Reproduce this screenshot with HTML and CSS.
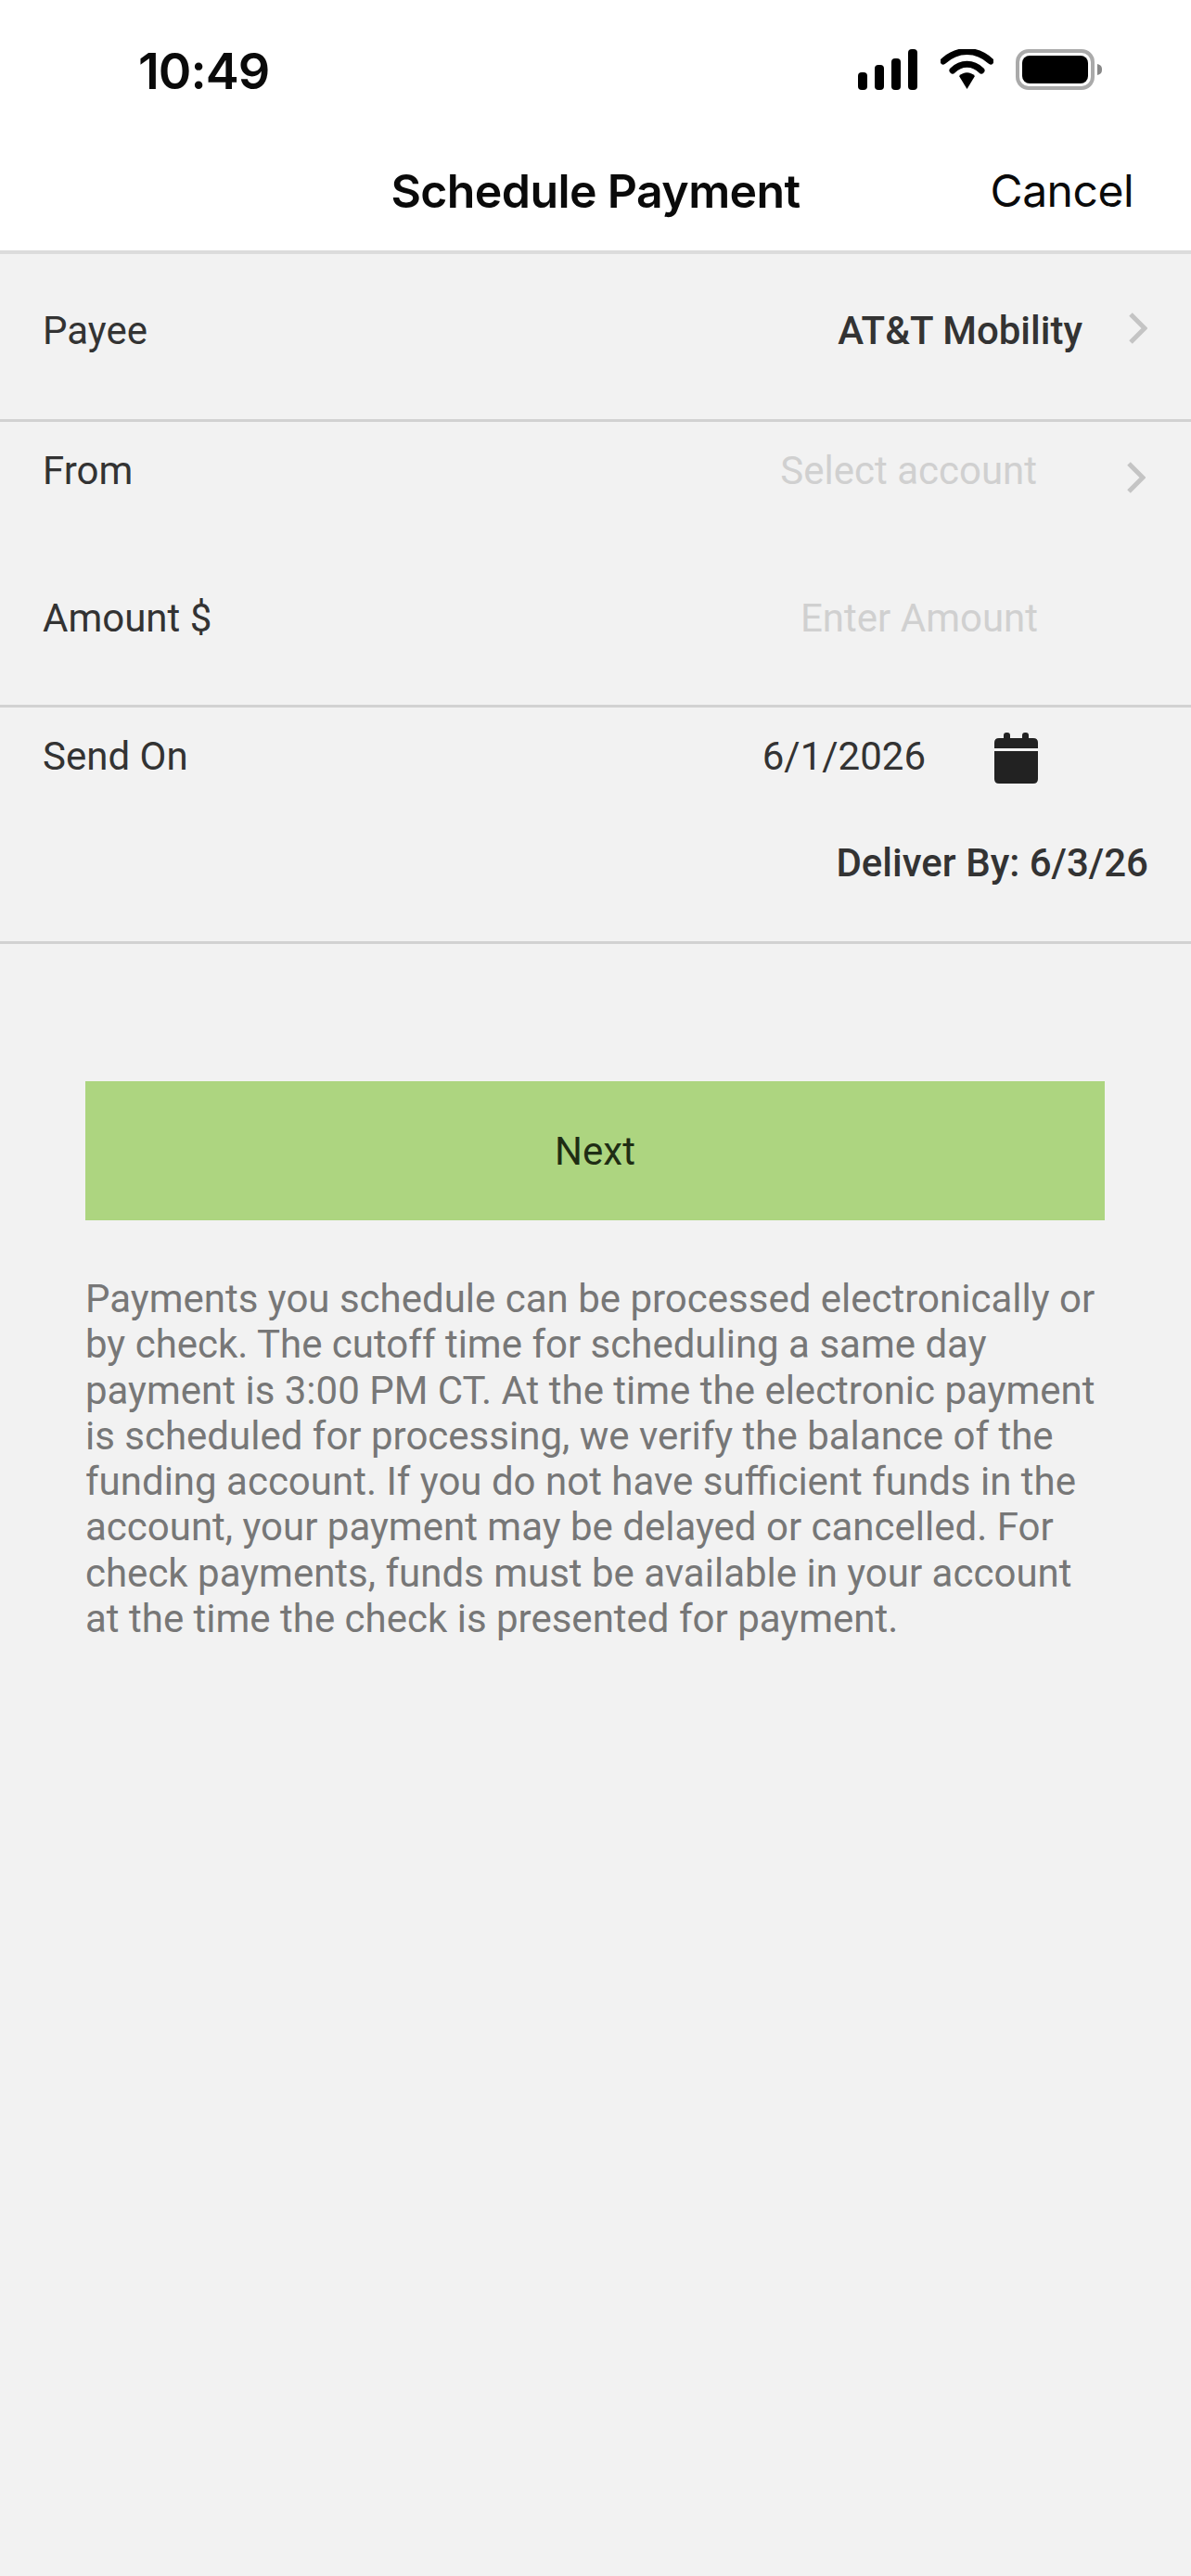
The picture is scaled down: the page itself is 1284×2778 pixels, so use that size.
FILE: index.html
```html
<!DOCTYPE html>
<html>
  <head>
    <meta charset="UTF-8">
    <title>Schedule Payment</title>
    <link rel="stylesheet" href="styles.css">
  </head>
  <body>
    <header class="top">
      <div class="status">
        <span class="time">10:49</span>
        <div class="status-icons">
          <svg class="signal" width="65" height="44" viewBox="0 0 65 44">
            <rect x="0" y="25" width="10" height="19" rx="4"/>
            <rect x="18" y="17" width="10" height="27" rx="4"/>
            <rect x="36" y="10" width="10" height="34" rx="4"/>
            <rect x="54" y="0" width="10" height="44" rx="4"/>
          </svg>
          <svg class="wifi" width="57" height="44" viewBox="0 0 57 44">
            <path d="M3 13 C18 -1 39 -1 54 13" fill="none" stroke="#000" stroke-width="7" stroke-linecap="round"/>
            <path d="M13 23 C22 14 35 14 44 23" fill="none" stroke="#000" stroke-width="7" stroke-linecap="round"/>
            <path d="M20 29 C25 24 32 24 37 29 L28.500 43 Z"/>
          </svg>
          <svg class="battery" width="94" height="44" viewBox="0 0 94 44">
            <rect x="2" y="2" width="81" height="40" rx="12" fill="none" stroke="#aaa" stroke-width="4"/>
            <rect x="7" y="7" width="71" height="30" rx="8"/>
            <path d="M88 16 C92 17 93 19 93 22 C93 25 92 27 88 28 Z" fill="#888"/>
          </svg>
        </div>
      </div>
      <nav class="nav">
        <h1 class="nav-title">Schedule Payment</h1>
        <a class="nav-cancel">Cancel</a>
      </nav>
    </header>

    <section class="group group-payee">
      <div class="row">
        <span class="label">Payee</span>
        <span class="value value-strong">AT&amp;T Mobility</span>
        <svg class="chevron chevron-near" width="20" height="34" viewBox="0 0 20 34"><path d="M2 2 L17 17 L2 32"/></svg>
      </div>
    </section>

    <section class="group group-account">
      <div class="row">
        <span class="label">From</span>
        <span class="value value-empty">Select account</span>
        <svg class="chevron" width="20" height="34" viewBox="0 0 20 34"><path d="M2 2 L17 17 L2 32"/></svg>
      </div>
      <div class="row row-amount">
        <span class="label">Amount $</span>
        <span class="value value-empty">Enter Amount</span>
      </div>
    </section>

    <section class="group group-date">
      <div class="row">
        <span class="label">Send On</span>
        <span class="value value-date">6/1/2026</span>
        <svg class="calendar" width="47" height="55" viewBox="0 0 47 55">
          <rect x="10" y="0" width="7" height="12" rx="3"/>
          <rect x="30" y="0" width="7" height="12" rx="3"/>
          <path d="M5 6 H42 Q47 6 47 11 V17 H0 V11 Q0 6 5 6 Z"/>
          <path d="M0 20 H47 V50 Q47 55 42 55 H5 Q0 55 0 50 Z"/>
        </svg>
      </div>
      <div class="deliver">Deliver By: 6/3/26</div>
    </section>

    <main class="content">
      <button class="next" type="button">Next</button>
      <p class="note">Payments you schedule can be processed electronically or by check. The cutoff time for scheduling a same day payment is 3:00 PM CT. At the time the electronic payment is scheduled for processing, we verify the balance of the funding account. If you do not have sufficient funds in the account, your payment may be delayed or cancelled. For check payments, funds must be available in your account at the time the check is presented for payment.</p>
    </main>
  </body>
</html>
```

FILE: styles.css
```css
html, body {
  margin: 0;
  padding: 0;
}
body {
  width: 1284px;
  height: 2778px;
  overflow: hidden;
  background-color: #f2f2f2;
  font-family: Roboto, "Liberation Sans", sans-serif;
  font-size: 42px;
  line-height: 48px;
  color: #333;
}

.top {
  height: 270px;
  background-color: #fff;
  border-bottom: 4px solid #dcdcdc;
  font-family: Inter, "Liberation Sans", sans-serif;
  color: #0a0a0a;
}
.status {
  display: flex;
  justify-content: space-between;
  align-items: flex-start;
  height: 53px;
  padding: 47px 95px 0 149px;
}
.time {
  font-size: 54px;
  line-height: 60px;
  font-weight: 600;
  letter-spacing: -1px;
}
.status-icons {
  display: flex;
  gap: 24px;
  padding-top: 6px;
}
.nav {
  position: relative;
  display: flex;
  justify-content: flex-end;
  padding: 76px 62px 0 0;
}
.nav-title {
  position: absolute;
  left: 0;
  right: 0;
  margin: 0;
  text-align: center;
  font-size: 50px;
  line-height: 60px;
  font-weight: 600;
  letter-spacing: -0.6px;
}
.nav-cancel {
  font-size: 48px;
  line-height: 60px;
  letter-spacing: -0.5px;
}

.group {
  border-bottom: 3px solid #d2d2d2;
  padding: 29px 46px 0 46px;
}
.group-payee {
  height: 119px;
  padding-top: 59px;
}
.group-account {
  height: 276px;
}
.group-date {
  height: 223px;
}
.row {
  display: flex;
  align-items: flex-start;
}
.row-amount {
  margin-top: 111px;
}
.label {
  flex: 1;
}
.value-strong {
  font-weight: 500;
}
.value-empty {
  color: #d0d0d0;
}
.value-date {
  margin-right: 74px;
}
.chevron {
  margin: 14px 3px 0 97px;
  flex: none;
}
.chevron path {
  fill: none;
  stroke: #c4c4c4;
  stroke-width: 5;
}
.chevron-near {
  margin: 4px 1px 0 50px;
}
.row-amount .value {
  margin-right: 119px;
}
.calendar {
  margin: -2px 119px 0 0;
  fill: #222;
}
.deliver {
  margin-top: 62px;
  text-align: right;
  font-weight: 500;
}

.content {
  padding: 148px 93px 0 92px;
}
.next {
  display: block;
  width: 100%;
  height: 150px;
  border: none;
  background-color: #add580;
  color: #1f2d14;
  font-family: inherit;
  font-size: 42px;
  padding: 0;
}
.note {
  margin: 60px 0 0;
  line-height: 49.25px;
  color: #777;
}
```
